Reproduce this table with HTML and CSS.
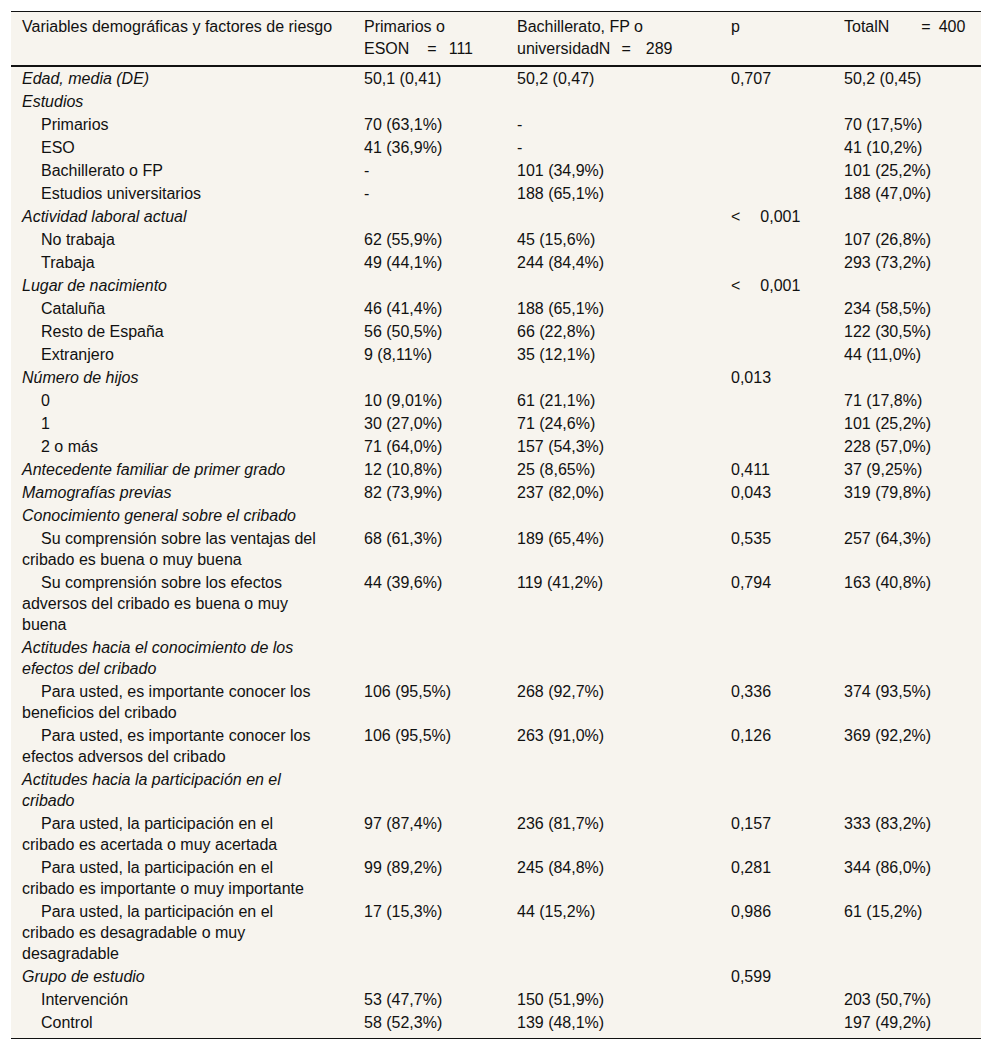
FILE: index.html
```html
<!DOCTYPE html>
<html lang="es">
<head>
<meta charset="utf-8">
<title>Tabla</title>
<link rel="stylesheet" href="styles.css">
</head>
<body>
<table class="tbl">
  <colgroup>
    <col class="c1"><col class="c2"><col class="c3"><col class="c4"><col class="c5">
  </colgroup>
  <thead>
    <tr>
      <th>Variables demográficas y factores de riesgo</th>
      <th>Primarios o <span class="nw">ESON<span class="sp-a"></span>=<span class="sp-b"></span>111</span></th>
      <th>Bachillerato, FP o <span class="nw">universidadN<span class="sp-c"></span>=<span class="sp-d"></span>289</span></th>
      <th>p</th>
      <th><span class="nw">TotalN<span class="sp-e"></span>=<span class="sp-f"></span>400</span></th>
    </tr>
  </thead>
  <tbody>
    <tr><td class="cat">Edad, media (DE)</td><td>50,1 (0,41)</td><td>50,2 (0,47)</td><td>0,707</td><td>50,2 (0,45)</td></tr>
    <tr><td class="cat">Estudios</td><td></td><td></td><td></td><td></td></tr>
    <tr><td class="sub">Primarios</td><td>70 (63,1%)</td><td>-</td><td></td><td>70 (17,5%)</td></tr>
    <tr><td class="sub">ESO</td><td>41 (36,9%)</td><td>-</td><td></td><td>41 (10,2%)</td></tr>
    <tr><td class="sub">Bachillerato o FP</td><td>-</td><td>101 (34,9%)</td><td></td><td>101 (25,2%)</td></tr>
    <tr><td class="sub">Estudios universitarios</td><td>-</td><td>188 (65,1%)</td><td></td><td>188 (47,0%)</td></tr>
    <tr><td class="cat">Actividad laboral actual</td><td></td><td></td><td><span class="nw">&lt;<span class="sp-lt"></span>0,001</span></td><td></td></tr>
    <tr><td class="sub">No trabaja</td><td>62 (55,9%)</td><td>45 (15,6%)</td><td></td><td>107 (26,8%)</td></tr>
    <tr><td class="sub">Trabaja</td><td>49 (44,1%)</td><td>244 (84,4%)</td><td></td><td>293 (73,2%)</td></tr>
    <tr><td class="cat">Lugar de nacimiento</td><td></td><td></td><td><span class="nw">&lt;<span class="sp-lt"></span>0,001</span></td><td></td></tr>
    <tr><td class="sub">Cataluña</td><td>46 (41,4%)</td><td>188 (65,1%)</td><td></td><td>234 (58,5%)</td></tr>
    <tr><td class="sub">Resto de España</td><td>56 (50,5%)</td><td>66 (22,8%)</td><td></td><td>122 (30,5%)</td></tr>
    <tr><td class="sub">Extranjero</td><td>9 (8,11%)</td><td>35 (12,1%)</td><td></td><td>44 (11,0%)</td></tr>
    <tr><td class="cat">Número de hijos</td><td></td><td></td><td>0,013</td><td></td></tr>
    <tr><td class="sub">0</td><td>10 (9,01%)</td><td>61 (21,1%)</td><td></td><td>71 (17,8%)</td></tr>
    <tr><td class="sub">1</td><td>30 (27,0%)</td><td>71 (24,6%)</td><td></td><td>101 (25,2%)</td></tr>
    <tr><td class="sub">2 o más</td><td>71 (64,0%)</td><td>157 (54,3%)</td><td></td><td>228 (57,0%)</td></tr>
    <tr><td class="cat">Antecedente familiar de primer grado</td><td>12 (10,8%)</td><td>25 (8,65%)</td><td>0,411</td><td>37 (9,25%)</td></tr>
    <tr><td class="cat">Mamografías previas</td><td>82 (73,9%)</td><td>237 (82,0%)</td><td>0,043</td><td>319 (79,8%)</td></tr>
    <tr><td class="cat">Conocimiento general sobre el cribado</td><td></td><td></td><td></td><td></td></tr>
    <tr><td class="sub">Su comprensión sobre las ventajas del cribado es buena o muy buena</td><td>68 (61,3%)</td><td>189 (65,4%)</td><td>0,535</td><td>257 (64,3%)</td></tr>
    <tr><td class="sub">Su comprensión sobre los efectos adversos del cribado es buena o muy buena</td><td>44 (39,6%)</td><td>119 (41,2%)</td><td>0,794</td><td>163 (40,8%)</td></tr>
    <tr><td class="cat">Actitudes hacia el conocimiento de los efectos del cribado</td><td></td><td></td><td></td><td></td></tr>
    <tr><td class="sub">Para usted, es importante conocer los beneficios del cribado</td><td>106 (95,5%)</td><td>268 (92,7%)</td><td>0,336</td><td>374 (93,5%)</td></tr>
    <tr><td class="sub">Para usted, es importante conocer los efectos adversos del cribado</td><td>106 (95,5%)</td><td>263 (91,0%)</td><td>0,126</td><td>369 (92,2%)</td></tr>
    <tr><td class="cat">Actitudes hacia la participación en el cribado</td><td></td><td></td><td></td><td></td></tr>
    <tr><td class="sub">Para usted, la participación en el cribado es acertada o muy acertada</td><td>97 (87,4%)</td><td>236 (81,7%)</td><td>0,157</td><td>333 (83,2%)</td></tr>
    <tr><td class="sub">Para usted, la participación en el cribado es importante o muy importante</td><td>99 (89,2%)</td><td>245 (84,8%)</td><td>0,281</td><td>344 (86,0%)</td></tr>
    <tr><td class="sub">Para usted, la participación en el cribado es desagradable o muy desagradable</td><td>17 (15,3%)</td><td>44 (15,2%)</td><td>0,986</td><td>61 (15,2%)</td></tr>
    <tr><td class="cat">Grupo de estudio</td><td></td><td></td><td>0,599</td><td></td></tr>
    <tr><td class="sub">Intervención</td><td>53 (47,7%)</td><td>150 (51,9%)</td><td></td><td>203 (50,7%)</td></tr>
    <tr><td class="sub">Control</td><td>58 (52,3%)</td><td>139 (48,1%)</td><td></td><td>197 (49,2%)</td></tr>
  </tbody>
</table>
</body>
</html>
```
FILE: styles.css
```css
html, body {
  margin: 0;
  padding: 0;
  background: #ffffff;
}

body {
  padding: 11px 11px 0 11px;
  font-family: "Liberation Sans", Arial, sans-serif;
  font-size: 16px;
  color: #111111;
}

.tbl {
  width: 970px;
  border-collapse: collapse;
  table-layout: fixed;
  background: #f7f4ee;
  border-top: 1px solid #111111;
  border-bottom: 1px solid #111111;
}

.c1 { width: 342px; }
.c2 { width: 153px; }
.c3 { width: 214px; }
.c4 { width: 113px; }
.c5 { width: 148px; }

.tbl th {
  font-weight: normal;
  text-align: left;
  vertical-align: top;
  line-height: 22px;
  padding: 4px 11px 5px 11px;
  border-bottom: 2px solid #111111;
}

.tbl td {
  text-align: left;
  vertical-align: top;
  line-height: 21px;
  padding: 1px 11px 1px 11px;
}

.tbl td:first-child {
  padding-right: 29px;
}

.tbl tbody tr:last-child td {
  padding-bottom: 5px;
}

.cat {
  font-style: italic;
}

.sub {
  text-indent: 19px;
}

.nw {
  white-space: nowrap;
}

.sp-a, .sp-b, .sp-c, .sp-d, .sp-e, .sp-f, .sp-lt {
  display: inline-block;
}
.sp-a { width: 18px; }
.sp-b { width: 12px; }
.sp-c { width: 11px; }
.sp-d { width: 15px; }
.sp-e { width: 32px; }
.sp-f { width: 8px; }
.sp-lt { width: 20px; }
```
